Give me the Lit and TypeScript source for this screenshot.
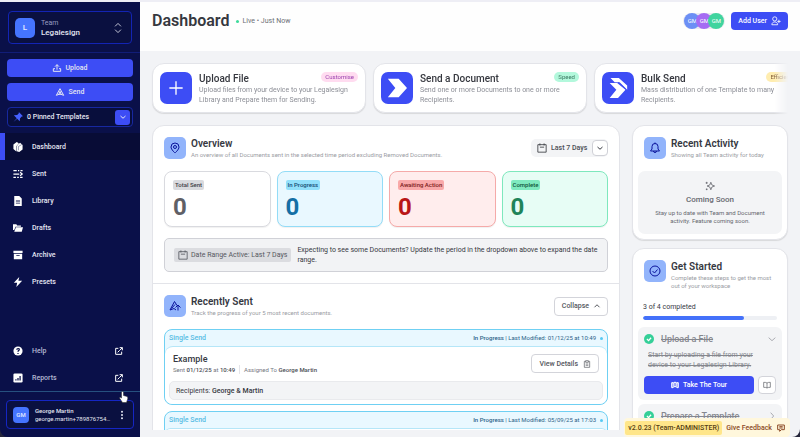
import { LitElement, html, css, svg, nothing, type TemplateResult } from "lit";
import { customElement } from "lit/decorators.js";
import { classMap } from "lit/directives/class-map.js";

// Line and solid icons, all on a 24 unit grid.
const shapes: Record<string, TemplateResult> = {
  upload: svg`<path d="M12 17V2M6 8l6-6 6 6M6 14H1v8h22v-8h-5"/>`,
  send: svg`<path d="M12 2 23 22l-8-3H9l-8 3L12 2zM9 18l3-8 3 8"/>`,
  sort: svg`<path d="M5 8l7-7 7 7M5 16l7 7 7-7"/>`,
  down: svg`<path d="M2 8l10 9 10-9"/>`,
  up: svg`<path d="M2 17l10-10 10 10"/>`,
  right: svg`<path d="M8 2l9 10-9 10"/>`,
  plus: svg`<path d="M12 2v20M2 12h20"/>`,
  external: svg`<path d="M10 4H2v18h18v-8M14 2h8v8M22 2l-9 9M8 16l5-5"/>`,
  calendar: svg`<path d="M2 4h20v18H2zM7 10h10M7 1v5M17 1v5"/>`,
  pin: svg`<path d="M12 22s8-7 8-12a8 8 0 0 0-16 0c0 5 8 12 8 12z"/><circle cx="12" cy="10" r="3"/>`,
  bell: svg`<path d="M3 18h18l-3-4V9a6 6 0 0 0-12 0v5zM9 18a3 3 0 0 0 6 0M12 3V1"/>`,
  check: svg`<circle cx="12" cy="12" r="10"/><path d="M7 12l4 4 6-7"/>`,
  recent: svg`<path d="M14 20l-4-3-8 3L11 3l5 8M5 17l7-8M18 21V11M13 15l5-5 5 5"/>`,
  clip: svg`<path d="M8 4H4v18h16V4h-4M8 2h8v5H8zM8 12h8M8 16h8"/>`,
  map: svg`<path d="M2 5h4v15H2zM18 5h4v15h-4zM6 8l3-4h6l3 4M6 20l3-3h6l3 3M9 4v13M15 4v13"/>`,
  book: svg`<path d="M12 6c-3-2-6-2-10-2v15c4 0 7 0 10 2 3-2 6-2 10-2V4c-4 0-7 0-10 2zM12 6v15"/>`,
  sparkle: svg`<path d="M14 3l2.500 6.500L23 12l-6.500 2.500L14 21l-2.500-6.500L5 12l6.500-2.500z"/><path d="M4 2v5M1.500 4.500h5M4 18v4M2 20h4"/>`,
  chat: svg`<path d="M2 3h20v14h-9l-5 5v-5H2zM7 8h10M7 12h10"/>`,
  user: svg`<circle cx="9" cy="7" r="5"/><path d="M2 21c0-9 14-9 14 0zM19 9v8M15 13h8"/>`,
  tack: svg`<path fill="currentColor" stroke="none" d="M14 0l10 10-3 1-4 4-1 7-6-6-9 8 8-9-7-7 8-1 4-4z"/>`,
  dots: svg`<g fill="currentColor" stroke="none"><circle cx="12" cy="2" r="3"/><circle cx="12" cy="12" r="3"/><circle cx="12" cy="22" r="3"/></g>`,
  home: svg`<g fill="currentColor" stroke="none"><path d="M9 0 1 6v11l7 6V10l6-7zM12 6l5-4 6 5v11l-8 6-6-2V10z"/></g><path class="ink thin" d="M13 20V11l8-5"/>`,
  sent: svg`<path stroke-width="3" d="M1 4h8M12 4h3M18 4h5M1 12h14M17 8l5 4-5 4M1 20h6M10 20h4M17 20h6"/>`,
  library: svg`<path fill="currentColor" stroke="none" fill-rule="evenodd" d="M3 0h12l6 6v18H3zM7 11v2h10v-2zM7 16v2h10v-2z"/>`,
  drafts: svg`<path fill="currentColor" stroke="none" d="M0 3h8l2 3h9v3H6L3 17H0zM7 10h17l-3 11H3z"/>`,
  archive: svg`<path fill="currentColor" stroke="none" fill-rule="evenodd" d="M1 2h22v5H1zM2 9h20v13H2zM8 12v2h8v-2z"/>`,
  bolt: svg`<path fill="currentColor" stroke="none" d="M15 0 2 14h8l-2 10 14-15h-9z"/>`,
  help: svg`<circle cx="12" cy="12" r="11" fill="currentColor" stroke="none"/><path class="ink" d="M9 9c0-4 7-4 6 0-1 2-3 2-3 5M12 17v2"/>`,
  reports: svg`<rect x="1" y="1" width="22" height="22" rx="3" fill="currentColor" stroke="none"/><path class="ink" d="M7 18v-3M12 18v-6M17 18V7"/>`,
  arrow: svg`<path fill="currentColor" stroke="none" d="M1 1h13l10 11-10 11H1l9-11z"/>`,
  bulk: svg`<path fill="currentColor" stroke="none" d="M3 0h10l10 9v5l-9-9H8zM2 6h9l10 8-9 10H2l8-10z"/><path stroke="#3d4df5" stroke-width="1" d="M12 5l10 9"/>`,
  done: svg`<circle cx="12" cy="12" r="12" fill="currentColor" stroke="none"/><path stroke="#fff" stroke-width="3" d="M7 12l4 4 6-7"/>`,
};

const icon = (name: string, size = "i10") =>
  html`<svg class="icon ${size}" viewBox="0 0 24 24" aria-hidden="true">${shapes[name]}</svg>`;

const shared = css`
  *, :host { box-sizing: border-box; }
  :host { font-family: Roboto, "Liberation Sans", sans-serif; font-size: 8px; line-height: 10px; color: #36383f; }
  h1, h2, h3, p { margin: 0; }
  h1, h2, h3 { font-weight: 600; }
  b { font-weight: 500; }
  button, select { font: inherit; color: inherit; margin: 0; padding: 0; cursor: pointer; }
  a { color: inherit; text-decoration: none; }
  .icon { display: block; flex: none; fill: none; stroke: currentColor; stroke-width: 2; overflow: visible; }
  .i6 { width: 6px; height: 6px; stroke-width: 4; }
  .i8 { width: 8px; height: 8px; stroke-width: 3; }
  .i10 { width: 10px; height: 10px; }
  .i12 { width: 12px; height: 12px; }
  .i16 { width: 16px; height: 16px; }
  .i20 { width: 20px; height: 20px; }
  .ink { stroke: #0a1049; stroke-width: 3; }
  .thin { stroke-width: 1; }
`;

@customElement("side-bar")
class SideBar extends LitElement {
  static styles = [shared, css`
    :host { display: flex; flex-direction: column; min-height: 0; border-bottom-left-radius: 8px; background: #0a1049; color: #e4e6f2; font-weight: 500; }
    .team { display: flex; align-items: center; gap: 6px; margin: 9px 8px 8px; height: 33px; padding: 0 8px 0 6px; border: 1px solid #1324b4; border-radius: 4px; background: #0a1040; text-align: left; }
    .mark { display: grid; place-items: center; flex: none; width: 20px; height: 20px; border-radius: 5px; background: #4574ff; color: #e4ebff; }
    .grow { flex: 1; min-width: 0; }
    .dim { color: #969cc0; font-weight: 400; font-size: 7px; display: block; }
    .actions { display: flex; flex-direction: column; gap: 6px; padding: 6px 7px; border-top: 1px solid #111d78; font-size: 7px; }
    .action { display: flex; align-items: center; justify-content: center; gap: 5px; height: 18px; border: 0; border-radius: 4px; background: #3d4df5; }
    .pinned { display: flex; align-items: center; gap: 4px; height: 20px; padding: 0 2px 0 5px; border: 1px solid #1728a0; border-radius: 4px; background: #080e3c; text-align: left; }
    .tack { color: #4560ff; }
    .drop { display: grid; place-items: center; width: 15px; height: 15px; border-radius: 3px; background: #3d4df5; }
    nav { display: flex; flex-direction: column; }
    .link { display: flex; align-items: center; gap: 9px; height: 27px; padding: 0 17px 0 8px; border-left: 5px solid transparent; font-size: 7px; }
    .link.on { border-color: #3d4df5; background: #080c36; }
    .link .icon { color: #fff; }
    .foot { margin-top: auto; }
    .foot .link { color: #b5b9d3; }
    .user { display: flex; align-items: center; gap: 6px; min-width: 0; margin: 8px 6px; height: 29px; padding: 0 7px 0 6px; border: 1px solid #1526c4; border-radius: 4px; background: #0a1040; text-align: left; font-size: 6px; line-height: 8px; }
    .who { border-top: 1px solid #26507f; display: grid; grid-template-columns: minmax(0, 1fr); }
    .gm { width: 16px; height: 16px; border-radius: 4px; }
    .mail { display: block; overflow: hidden; text-overflow: ellipsis; white-space: nowrap; font-weight: 400; }
  `];

  links = [
    ["Dashboard", "home"], ["Sent", "sent"], ["Library", "library"],
    ["Drafts", "drafts"], ["Archive", "archive"], ["Presets", "bolt"],
  ];

  render() {
    return html`
      <button class="team"><span class="mark">L</span>
        <span class="grow"><span class="dim">Team</span>Legalesign</span>${icon("sort", "i10")}</button>
      <div class="actions">
        <button class="action">${icon("upload", "i8")}Upload</button>
        <button class="action">${icon("send", "i8")}Send</button>
        <button class="pinned"><span class="tack">${icon("tack", "i10")}</span>
          <span class="grow">0 Pinned Templates</span><span class="drop">${icon("down", "i6")}</span></button>
      </div>
      <nav>${this.links.map(([label, name], i) => html`
        <a href="#" class=${classMap({ link: true, on: i === 0 })}>${icon(name)}${label}</a>`)}</nav>
      <nav class="foot">${[["Help", "help"], ["Reports", "reports"]].map(([label, name]) => html`
        <a href="#" class="link">${icon(name)}<span class="grow">${label}</span>${icon("external", "i8")}</a>`)}</nav>
      <div class="who"><button class="user"><span class="mark gm">GM</span>
        <span class="grow">George Martin<span class="mail">george.martin+7898767546543@legalesign.com</span></span>
        ${icon("dots", "i8")}</button></div>`;
  }
}

@customElement("panel-head")
class PanelHead extends LitElement {
  static properties = { icon: {}, heading: {}, note: {} };
  declare icon: string;
  declare heading: string;
  declare note: string;
  static styles = [shared, css`
    :host { display: flex; gap: 5px; min-width: 0; }
    .tile { display: grid; place-items: center; flex: none; width: 22px; height: 22px; border-radius: 5px; background: #92b4fb; color: #0b149c; }
    h2 { font-size: 10px; line-height: 14px; }
    p { font-size: 6px; line-height: 8px; color: #9a9ca3; }
  `];
  render() {
    return html`<span class="tile">${icon(this.icon, "i12")}</span>
      <div><h2>${this.heading}</h2><p>${this.note}</p></div>`;
  }
}

@customElement("app-root")
class AppRoot extends LitElement {
  static styles = [shared, css`
    :host { display: grid; grid-template-columns: 140px minmax(0, 1fr); grid-template-rows: minmax(0, 1fr); height: 100vh; position: relative; overflow: hidden; border-top: 2px solid #eeeef5; background: #26273c; }
    main { display: flex; flex-direction: column; min-height: 0; min-width: 0; overflow: hidden; border-bottom-right-radius: 8px; background: #f2f3f6; }
    header { display: flex; align-items: center; flex: none; height: 49px; padding: 0 12px 11px; background: #fefefe; }
    h1 { font-size: 16px; line-height: 20px; }
    .live { display: flex; align-items: center; gap: 3px; margin: 0 auto 0 7px; font-size: 7px; color: #6c6e75; }
    .live::before { content: ""; width: 3px; height: 3px; border-radius: 50%; background: #3ddb9b; }
    .faces { display: flex; padding: 0 1px; border-radius: 8px; background: #ececf0; }
    .face { display: grid; place-items: center; width: 16px; height: 16px; margin-right: -4px; border-radius: 50%; color: #fff; font-size: 6px; background: #6c8ff5; }
    .face.b { background: #a56bf3; }
    .face.c { background: #40d49e; margin-right: 0; }
    .add { display: flex; align-items: center; gap: 4px; height: 18px; margin-left: 6px; padding: 0 7px; border: 0; border-radius: 4px; background: #3d4df5; color: #fff; font-size: 7px; font-weight: 500; }
    .strip { display: flex; flex: none; gap: 7px; padding: 12px 0 12px 12px; margin-right: 12px; overflow: hidden; -webkit-mask-image: linear-gradient(to left, transparent, #000 14px); mask-image: linear-gradient(to left, transparent, #000 14px); }
    .card { border: 1px solid #e3e4e9; border-radius: 12px; background: #fff; box-shadow: 0 1px 1px #0000001c; }
    .quick { display: grid; grid-template-columns: 32px 1fr auto; column-gap: 7px; flex: none; width: 214px; height: 50px; padding: 8px 7px; }
    .quick .logo { display: grid; place-items: center; grid-row: span 2; width: 32px; height: 32px; border-radius: 7px; background: #3d4df5; color: #fff; }
    .quick h2 { font-size: 10px; line-height: 13px; font-weight: 500; }
    .quick p { grid-column: 2 / 4; font-size: 7px; line-height: 10px; color: #8d8f97; }
    .pill { height: 10px; padding: 0 4px; border-radius: 5px; font-size: 6px; background: #ffdcf0; color: #9a3fae; }
    .pill.g { background: #b3f8dc; color: #3a7a62; }
    .pill.y { background: #ffedb0; color: #86603a; }
    .cols { display: grid; grid-template-columns: minmax(0, 3fr) minmax(0, 1fr); gap: 12px; flex: 1; min-height: 0; padding: 0 12px; }
    .left { min-height: 0; margin-bottom: 7px; overflow: hidden; }
    .left > .card { min-height: 340px; }
    .right { display: flex; flex-direction: column; gap: 8px; min-height: 0; }
    section { padding: 11px; }
    section + section { border-top: 1px solid #e3e4e9; }
    .row { display: flex; justify-content: space-between; align-items: center; }
    .period { display: flex; align-items: center; gap: 4px; height: 18px; padding-left: 6px; border-radius: 5px; background: #f3f4f6; }
    .pick { display: grid; grid-template-columns: auto 16px; align-items: center; }
    .pick select { grid-area: 1 / 1 / 2 / 3; appearance: none; border: 0; background: none; padding-right: 20px; font-size: 7px; font-weight: 500; color: #4c4e55; }
    .pick .chev { grid-area: 1 / 2; display: grid; place-items: center; height: 16px; border: 1px solid #d0d1d7; border-radius: 4px; background: #fff; pointer-events: none; }
    .stats { display: grid; grid-template-columns: repeat(4, 1fr); gap: 6px; margin: 12px 0 11px; }
    .stat { height: 56px; padding: 8px; border: 1px solid #d9dadf; border-radius: 8px; background: #fff; color: #5f6066; box-shadow: 0 1px 1px #0000000f; }
    .tag { display: inline-block; height: 10px; padding: 0 2px; border-radius: 2px; font-size: 6px; font-weight: 500; background: #d9dade; color: #3e4047; }
    .num { display: block; font-size: 24px; line-height: 34px; font-weight: 700; }
    .blue { border-color: #93dcf7; background: #e9f8ff; color: #156fa5; }
    .blue .tag { background: #92e0fb; color: #164b72; }
    .red { border-color: #f5aaa9; background: #ffeded; color: #b91616; }
    .red .tag { background: #f9a9a9; color: #7b1c1c; }
    .green { border-color: #7ee8bd; background: #e7fdf5; color: #1f8459; }
    .green .tag { background: #7feabf; color: #12573b; }
    .info { display: flex; align-items: center; gap: 6px; height: 34px; padding: 0 9px; border: 1px solid #d0d1d7; border-radius: 5px; background: #f2f3f5; font-size: 7px; }
    .range { display: flex; align-items: center; gap: 3px; flex: none; height: 14px; padding: 0 4px; border-radius: 2px; background: #dbdce0; color: #56585f; }
    .outline { display: flex; align-items: center; justify-content: center; gap: 5px; height: 19px; padding: 0 7px; border: 1px solid #d3d4da; border-radius: 4px; background: #fff; font-size: 7px; font-weight: 500; color: #55575e; }
    .outline .i8 { stroke-width: 2; }
    .sent { margin-top: 12px; border: 1px solid #6fd0f3; border-radius: 8px; background: #e9f8ff; }
    .sent + .sent { margin-top: 6px; }
    .bar { display: flex; align-items: center; height: 16px; padding: 0 4px; font-size: 7px; color: #2b6288; }
    .bar .kind { flex: 1; color: #57bce4; font-weight: 500; }
    .bar .when { font-size: 6px; }
    .bar::after { content: ""; width: 3px; height: 3px; margin-left: 4px; border-radius: 50%; background: #57c9f3; }
    .doc { padding: 6px 4px 4px; border-top: 1px solid #b5e6f8; border-radius: 8px; background: #fff; }
    .doc .row { padding: 0 4px; }
    .doc h3 { font-size: 9px; line-height: 12px; font-weight: 500; }
    .meta { display: flex; gap: 4px; font-size: 6px; line-height: 9px; color: #76787f; }
    .meta b { color: #4a4c53; }
    .meta span + span { padding-left: 4px; border-left: 1px solid #e3e4e9; }
    .to { height: 19px; margin-top: 7px; padding: 4px 6px; border: 1px solid #e9eaed; border-radius: 5px; background: #f3f4f6; font-size: 7px; }
    .side { padding: 11px 5px 5px; }
    .side panel-head { padding: 0 6px; }
    .soon { display: flex; flex-direction: column; align-items: center; height: 63px; margin-top: 12px; padding: 10px 12px; border-radius: 7px; background: #f3f4f6; text-align: center; font-size: 6px; line-height: 8px; color: #66686f; }
    .soon h3 { font-size: 8px; line-height: 18px; font-weight: 500; }
    .grow { flex: 1; }
    .goal { display: grid; gap: 4px; margin: 12px 5px 7px; font-size: 7px; }
    progress { display: block; appearance: none; width: 100%; height: 4px; border: 0; border-radius: 2px; overflow: hidden; }
    progress::-webkit-progress-bar { background: #eef0f4; }
    progress::-webkit-progress-value { background: #4471fa; border-radius: 2px; }
    .step { padding: 0 6px; margin-top: 4px; border-radius: 6px; background: #f3f4f6; color: #85878e; }
    .step summary { display: flex; align-items: center; gap: 7px; height: 23px; list-style: none; font-size: 9px; font-weight: 500; }
    .step summary .grow { text-decoration: line-through; }
    .step summary > .i8 { stroke-width: 2; }
    .tick { color: #35cf98; }
    .step p { margin: 0 4px 6px; font-size: 7px; text-decoration: line-through; }
    .tour { display: flex; gap: 4px; padding-bottom: 6px; }
    .tour .add { flex: 1; margin: 0; justify-content: center; }
    .tour .outline { width: 18px; height: 18px; padding: 0; }
    .version { position: absolute; right: 10px; bottom: 0; display: flex; align-items: center; gap: 4px; height: 19px; padding: 0 5px 0 1px; border-radius: 4px; background: #fff7dc; font-size: 7px; font-weight: 500; color: #8c4b26; }
    .version span { padding: 2px 3px; border-radius: 2px; background: #ffe68a; color: #553e12; }
    .version a { display: flex; gap: 5px; align-items: center; }
    .pointer { position: absolute; left: 119px; top: 389px; width: 9px; height: 12px; }
  `];

  quick = [
    { name: "Upload File", text: "Upload files from your device to your Legalesign Library and Prepare them for Sending.", tag: "Customise", tone: "", art: "plus", size: "i16" },
    { name: "Send a Document", text: "Send one or more Documents to one or more Recipients.", tag: "Speed", tone: "g", art: "arrow", size: "i20" },
    { name: "Bulk Send", text: "Mass distribution of one Template to many Recipients.", tag: "Efficiency", tone: "y", art: "bulk", size: "i20" },
  ];

  stats = [["Total Sent", ""], ["In Progress", "blue"], ["Awaiting Action", "red"], ["Complete", "green"]];

  sent(date: string, full: boolean) {
    return html`<article class="sent">
      <div class="bar"><span class="kind">Single Send</span><span class="when"><b>In Progress</b> | Last Modified: ${date}</span></div>
      <div class="doc">${full ? html`
        <div class="row"><div><h3>Example</h3>
          <p class="meta"><span>Sent <b>01/12/25</b> at <b>10:49</b></span><span>Assigned To <b>George Martin</b></span></p></div>
          <button class="outline">View Details ${icon("clip", "i8")}</button></div>
        <p class="to">Recipients: <b>George &amp; Martin</b></p>` : nothing}</div>
    </article>`;
  }

  render() {
    return html`
      <side-bar></side-bar>
      <main>
        <header>
          <h1>Dashboard</h1><span class="live">Live • Just Now</span>
          <span class="faces"><span class="face">GM</span><span class="face b">GM</span><span class="face c">GM</span></span>
          <button class="add">Add User ${icon("user", "i10")}</button>
        </header>
        <div class="strip">${this.quick.map((q) => html`
          <article class="card quick"><span class="logo">${icon(q.art, q.size)}</span>
            <h2>${q.name}</h2><span class="pill ${q.tone}">${q.tag}</span><p>${q.text}</p></article>`)}</div>
        <div class="cols">
          <div class="left"><div class="card">
            <section>
              <div class="row">
                <panel-head icon="pin" heading="Overview" note="An overview of all Documents sent in the selected time period excluding Removed Documents."></panel-head>
                <div class="period">${icon("calendar", "i10")}<span class="pick">
                  <select aria-label="Period"><option>Last 7 Days</option><option>Today</option></select>
                  <span class="chev">${icon("down", "i6")}</span></span></div>
              </div>
              <div class="stats">${this.stats.map(([label, tone]) => html`
                <div class="stat ${tone}"><span class="tag">${label}</span><span class="num">0</span></div>`)}</div>
              <div class="info"><span class="range">${icon("calendar", "i10")}Date Range Active: Last 7 Days</span>
                <p>Expecting to see some Documents? Update the period in the dropdown above to expand the date range.</p></div>
            </section>
            <section>
              <div class="row">
                <panel-head icon="recent" heading="Recently Sent" note="Track the progress of your 5 most recent documents."></panel-head>
                <button class="outline">Collapse ${icon("up", "i6")}</button>
              </div>
              ${this.sent("01/12/25 at 10:49", true)}${this.sent("05/09/25 at 17:03", false)}
            </section>
          </div></div>
          <div class="right">
            <div class="card side">
              <panel-head icon="bell" heading="Recent Activity" note="Showing all Team activity for today"></panel-head>
              <div class="soon">${icon("sparkle")}<h3>Coming Soon</h3>
                <p>Stay up to date with Team and Document activity. Feature coming soon.</p></div>
            </div>
            <div class="card side">
              <panel-head icon="check" heading="Get Started" note="Complete these steps to get the most out of your workspace"></panel-head>
              <label class="goal">3 of 4 completed<progress max="4" value="3"></progress></label>
              <details class="step" open>
                <summary><span class="tick">${icon("done")}</span><span class="grow">Upload a File</span>${icon("down", "i8")}</summary>
                <p>Start by uploading a file from your device to your Legalesign Library.</p>
                <div class="tour"><button class="add">${icon("map", "i8")}Take The Tour</button>
                  <button class="outline" aria-label="Read the guide">${icon("book", "i8")}</button></div>
              </details>
              <details class="step">
                <summary><span class="tick">${icon("done")}</span><span class="grow">Prepare a Template</span>${icon("right", "i8")}</summary>
              </details>
            </div>
          </div>
        </div>
      </main>
      <div class="version"><span>v2.0.23 (Team-ADMINISTER)</span><a href="#">Give Feedback ${icon("chat", "i8")}</a></div>
      <svg class="pointer" viewBox="0 0 18 24" aria-hidden="true"><path fill="#fff" stroke="#222" stroke-width="1" d="M5 14V3c0-3 4-3 4 0v6l7 2c2 1 2 3 1 6l-2 6H7l-6-9c0-2 2-2 4 0z"/></svg>`;
  }
}
